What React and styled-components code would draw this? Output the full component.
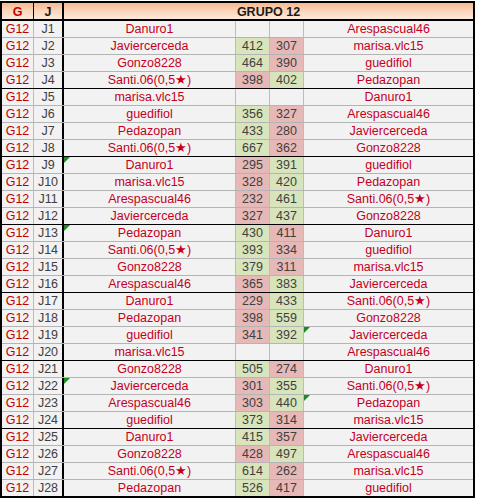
import React from "react";
import styled, { createGlobalStyle, css } from "styled-components";

const Global = createGlobalStyle`
  html, body { margin: 0; padding: 0; background: #ffffff; }
  body { font-family: "Liberation Sans", Arial, sans-serif; }
`;

const COLS = "32px 30px 172px 34px 34px 169px";

const Sheet = styled.div`
  width: 475px;
  margin-top: 1px;
  border: 2px solid #000;
  box-sizing: border-box;
  background: #f2f2f2;
  font-size: 12.5px;
`;

const HeaderRow = styled.div`
  display: grid;
  grid-template-columns: 32px 30px 1fr;
  height: 18px;
  box-sizing: border-box;
  border-bottom: 2px solid #000;
  background: linear-gradient(to bottom, #f6b98f 0%, #fbd8c0 55%, #fde9dc 100%);
`;

const HeadCell = styled.div`
  display: flex;
  align-items: center;
  justify-content: center;
  line-height: 16px;
  font-weight: 700;
  color: ${(p) => (p.$red ? "#c00000" : "#1a1a1a")};
  box-sizing: border-box;
  border-right: ${(p) => p.$edge || "none"};
  padding-top: 1px;
`;

const Row = styled.div`
  display: grid;
  grid-template-columns: ${COLS};
  height: 17px;
  box-sizing: border-box;
  border-bottom: 1px solid ${(p) => (p.$groupEnd ? "#000" : "#b4b4b4")};
  ${(p) => p.$last && css`border-bottom: none; height: 16px;`}
`;

const Cell = styled.div`
  position: relative;
  display: flex;
  align-items: center;
  justify-content: center;
  box-sizing: border-box;
  line-height: 16px;
  white-space: nowrap;
  overflow: hidden;
  border-right: ${(p) => (p.$thick ? "2px solid #000" : p.$noEdge ? "none" : "1px solid #bcbcbc")};
  color: ${(p) => p.$color || "#404040"};
  background: ${(p) =>
    p.$tone === "win" ? "#d8e4bc" : p.$tone === "loss" ? "#e6b8b7" : "transparent"};
  ${(p) =>
    p.$flag &&
    css`
      &::before {
        content: "";
        position: absolute;
        left: 0;
        top: 0;
        width: 0;
        height: 0;
        border-top: 6px solid #1f8a1f;
        border-right: 6px solid transparent;
      }
    `}
`;

const NAME_RED = "#c4001e";

const data = [
  ["Danuro1", null, null, "Arespascual46"],
  ["Javiercerceda", 412, 307, "marisa.vlc15"],
  ["Gonzo8228", 464, 390, "guedifiol"],
  ["Santi.06(0,5★)", 398, 402, "Pedazopan"],
  ["marisa.vlc15", null, null, "Danuro1"],
  ["guedifiol", 356, 327, "Arespascual46"],
  ["Pedazopan", 433, 280, "Javiercerceda"],
  ["Santi.06(0,5★)", 667, 362, "Gonzo8228"],
  ["Danuro1", 295, 391, "guedifiol"],
  ["marisa.vlc15", 328, 420, "Pedazopan"],
  ["Arespascual46", 232, 461, "Santi.06(0,5★)"],
  ["Javiercerceda", 327, 437, "Gonzo8228"],
  ["Pedazopan", 430, 411, "Danuro1"],
  ["Santi.06(0,5★)", 393, 334, "guedifiol"],
  ["Gonzo8228", 379, 311, "marisa.vlc15"],
  ["Arespascual46", 365, 383, "Javiercerceda"],
  ["Danuro1", 229, 433, "Santi.06(0,5★)"],
  ["Pedazopan", 398, 559, "Gonzo8228"],
  ["guedifiol", 341, 392, "Javiercerceda"],
  ["marisa.vlc15", null, null, "Arespascual46"],
  ["Gonzo8228", 505, 274, "Danuro1"],
  ["Javiercerceda", 301, 355, "Santi.06(0,5★)"],
  ["Arespascual46", 303, 440, "Pedazopan"],
  ["guedifiol", 373, 314, "marisa.vlc15"],
  ["Danuro1", 415, 357, "Javiercerceda"],
  ["Gonzo8228", 428, 497, "Arespascual46"],
  ["Santi.06(0,5★)", 614, 262, "marisa.vlc15"],
  ["Pedazopan", 526, 417, "guedifiol"],
];

const leftFlags = new Set([9, 13, 22]);
const rightFlags = new Set([19, 23]);

function tone(a, b) {
  if (a == null || b == null) return undefined;
  return a > b ? "win" : "loss";
}

export default function App() {
  return (
    <>
      <Global />
      <Sheet>
        <HeaderRow>
          <HeadCell $red $edge="1px solid #000">G</HeadCell>
          <HeadCell $edge="2px solid #000">J</HeadCell>
          <HeadCell>GRUPO 12</HeadCell>
        </HeaderRow>
        {data.map(([home, a, b, away], i) => {
          const n = i + 1;
          return (
            <Row key={n} $groupEnd={n % 4 === 0} $last={n === data.length}>
              <Cell $color="#c00000">G12</Cell>
              <Cell $thick>J{n}</Cell>
              <Cell $color={NAME_RED} $flag={leftFlags.has(n)}>{home}</Cell>
              <Cell $tone={tone(a, b)}>{a}</Cell>
              <Cell $tone={tone(b, a)}>{b}</Cell>
              <Cell $color={NAME_RED} $noEdge $flag={rightFlags.has(n)}>{away}</Cell>
            </Row>
          );
        })}
      </Sheet>
    </>
  );
}
